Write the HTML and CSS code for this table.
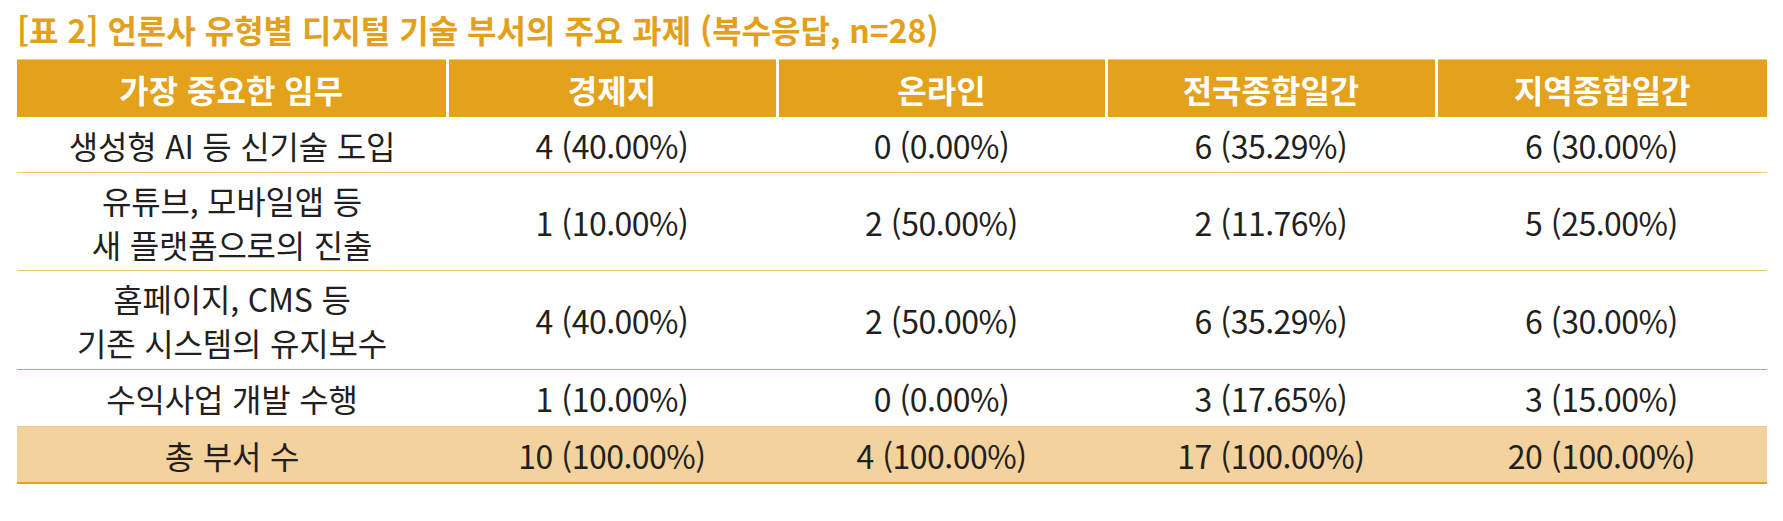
FILE: index.html
```html
<!DOCTYPE html>
<html lang="ko">
<head>
<meta charset="utf-8">
<title>표 2</title>
<link rel="stylesheet" href="styles.css">
</head>
<body>
<div class="page">
  <h1 class="title">[표 2] 언론사 유형별 디지털 기술 부서의 주요 과제 (복수응답, n=28)</h1>
  <table class="data">
    <colgroup>
      <col class="c1"><col class="c2"><col class="c3"><col class="c4"><col class="c5">
    </colgroup>
    <thead>
      <tr class="head">
        <th>가장 중요한 임무</th>
        <th>경제지</th>
        <th>온라인</th>
        <th>전국종합일간</th>
        <th>지역종합일간</th>
      </tr>
    </thead>
    <tbody>
      <tr class="r1">
        <td>생성형 AI 등 신기술 도입</td>
        <td>4 (40.00%)</td>
        <td>0 (0.00%)</td>
        <td>6 (35.29%)</td>
        <td>6 (30.00%)</td>
      </tr>
      <tr class="r2">
        <td>유튜브, 모바일앱 등<br>새 플랫폼으로의 진출</td>
        <td>1 (10.00%)</td>
        <td>2 (50.00%)</td>
        <td>2 (11.76%)</td>
        <td>5 (25.00%)</td>
      </tr>
      <tr class="r3">
        <td>홈페이지, CMS 등<br>기존 시스템의 유지보수</td>
        <td>4 (40.00%)</td>
        <td>2 (50.00%)</td>
        <td>6 (35.29%)</td>
        <td>6 (30.00%)</td>
      </tr>
      <tr class="r4">
        <td>수익사업 개발 수행</td>
        <td>1 (10.00%)</td>
        <td>0 (0.00%)</td>
        <td>3 (17.65%)</td>
        <td>3 (15.00%)</td>
      </tr>
      <tr class="total">
        <td>총 부서 수</td>
        <td>10 (100.00%)</td>
        <td>4 (100.00%)</td>
        <td>17 (100.00%)</td>
        <td>20 (100.00%)</td>
      </tr>
    </tbody>
  </table>
</div>
</body>
</html>
```

FILE: styles.css
```css
html, body {
  margin: 0;
  padding: 0;
  background: #ffffff;
}

.page {
  padding: 9px 0 0 17px;
  font-family: "Noto Sans CJK KR", "Noto Sans", sans-serif;
  color: #231f20;
}

.title {
  margin: 0;
  height: 50px;
  font-size: 32px;
  line-height: 41px;
  font-weight: 700;
  color: #e3a01a;
  letter-spacing: 0;
}

.data {
  width: 1750px;
  border-collapse: collapse;
  table-layout: fixed;
  font-size: 32px;
  letter-spacing: -0.5px;
}

.c1 { width: 430px; }
.c2 { width: 330px; }
.c3 { width: 329px; }
.c4 { width: 330px; }
.c5 { width: 331px; }

.head th {
  height: 57px;
  padding: 0;
  background: #e4a11b;
  color: #ffffff;
  font-weight: 700;
  text-align: center;
  vertical-align: middle;
  border-top: 1px solid #efca82;
  border-left: 3px solid #ffffff;
  line-height: 40px;
  letter-spacing: 0;
}

.head th:first-child {
  border-left: none;
}

.data td {
  padding: 0;
  text-align: center;
  vertical-align: middle;
  line-height: 44px;
  font-weight: 400;
}

.data td:first-child {
  letter-spacing: -0.2px;
}

.r1 td { height: 55px; border-bottom: 1px solid #ecc67c; }
.r2 td { height: 97px; border-bottom: 1px solid #ecc67c; }
.r3 td { height: 98px; border-bottom: 1px solid #e2a330; }
.r4 td { height: 56px; border-bottom: 1px solid #efc98a; }

.total td {
  height: 55px;
  background: #f3d29d;
  border-bottom: 2px solid #e3a224;
}
```
